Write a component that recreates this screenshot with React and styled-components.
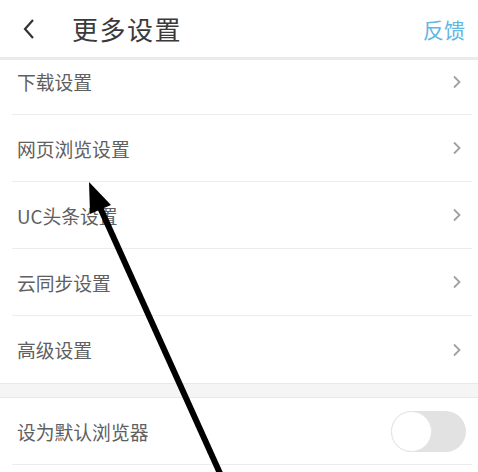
import React from "react";
import styled, { createGlobalStyle } from "styled-components";

const GlobalStyle = createGlobalStyle`
    html, body {
        margin: 0;
        padding: 0;
        background: #fff;
        font-family: "Noto Sans CJK SC", "Noto Sans", sans-serif;
    }
`;

const Page = styled("div")`
    position: relative;
    width: 478px;
    height: 472px;
    overflow: hidden;
    background: #fff;
`;

const Header = styled("div")`
    height: 57px;
    display: flex;
    align-items: center;
    padding: 0 13px 0 22px;
    border-bottom: 3px solid #ebebeb;
`;

const BackButton = styled("div")`
    width: 18px;
    height: 24px;
    display: flex;
    align-items: center;
    margin-right: 32px;
`;

const Title = styled("h1")`
    margin: 0;
    flex: 1;
    font-size: 26px;
    font-weight: 400;
    color: #3a3a3a;
    letter-spacing: 1.5px;
`;

const Feedback = styled("span")`
    font-size: 21px;
    color: #62b6e2;
`;

const Group = styled("div")`
    background: #fff;
`;

const Row = styled("div")`
    height: ${(p) => (p.$first ? "55px" : "67px")};
    box-sizing: border-box;
    padding-bottom: ${(p) => (p.$first ? "11px" : "0")};
    margin: 0 6px 0 12px;
    padding-left: 5px;
    padding-right: 10px;
    display: flex;
    align-items: center;
    justify-content: space-between;
    border-bottom: ${(p) => (p.$last ? "none" : "1.5px solid #ececec")};
`;

const Label = styled("span")`
    font-size: 18.8px;
    color: #606060;
`;

const Band = styled("div")`
    height: 13px;
    background: #f5f5f5;
    border-top: 1.5px solid #e8e8e8;
    border-bottom: 1.5px solid #e8e8e8;
`;

const Toggle = styled("div")`
    width: 75px;
    height: 41px;
    border-radius: 21px;
    background: #e2e2e2;
    display: flex;
    align-items: center;
    margin-right: -4px;
`;

const Knob = styled("div")`
    width: 39px;
    height: 39px;
    border-radius: 50%;
    background: #fff;
    border: 1px solid #e4e4e4;
`;

const Pointer = styled("svg")`
    position: absolute;
    left: 0;
    top: 0;
    pointer-events: none;
`;

const Chevron = () => (
    <svg width="10" height="16" viewBox="0 0 10 16">
        <path d="M2 2.5 L7.5 8 L2 13.5" fill="none" stroke="#a0a0a0" strokeWidth="1.8" />
    </svg>
);

const items = ["下载设置", "网页浏览设置", "UC头条设置", "云同步设置", "高级设置"];

const App = () => {
    return (
        <Page>
            <GlobalStyle />
            <Header>
                <BackButton>
                    <svg width="14" height="22" viewBox="0 0 14 22">
                        <path d="M11 2 L3 11 L11 20" fill="none" stroke="#333" strokeWidth="2.2" />
                    </svg>
                </BackButton>
                <Title>更多设置</Title>
                <Feedback>反馈</Feedback>
            </Header>

            <Group>
                {items.map((name, i) => (
                    <Row key={name} $first={i === 0} $last={i === items.length - 1}>
                        <Label>{name}</Label>
                        <Chevron />
                    </Row>
                ))}
            </Group>

            <Band />

            <Group>
                <Row>
                    <Label>设为默认浏览器</Label>
                    <Toggle>
                        <Knob />
                    </Toggle>
                </Row>
            </Group>

            {/* hand-drawn arrow pointing at the browsing settings row */}
            <Pointer width="478" height="472" viewBox="0 0 478 472">
                <line x1="98" y1="203" x2="223" y2="480" stroke="#000" strokeWidth="6" />
                <polygon points="89,182 90,214 111,205" fill="#000" />
            </Pointer>
        </Page>
    );
};

export default App;
